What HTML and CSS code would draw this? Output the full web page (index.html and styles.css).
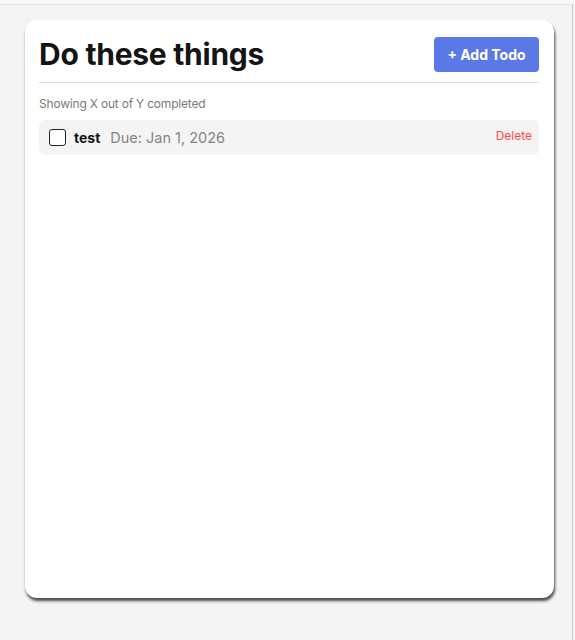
FILE: index.html
```html
<!DOCTYPE html>
<html lang="en">
<head>
<meta charset="utf-8">
<title>Todos</title>
<link rel="stylesheet" href="styles.css">
</head>
<body>
<div class="frame">
  <main class="card">
    <header class="card-header">
      <h1 class="title">Do these things</h1>
      <button class="add-btn" type="button">+ Add Todo</button>
    </header>
    <hr class="divider">
    <p class="summary">Showing X out of Y completed</p>
    <ul class="todo-list">
      <li class="todo-item">
        <span class="check" role="checkbox" aria-checked="false"></span>
        <span class="todo-name">test</span>
        <span class="todo-due">Due: Jan 1, 2026</span>
        <button class="delete-btn" type="button">Delete</button>
      </li>
    </ul>
  </main>
</div>
</body>
</html>
```

FILE: styles.css
```css
html, body {
  margin: 0;
  padding: 0;
  background: #f4f4f4;
  font-family: Inter, "Noto Sans", "Liberation Sans", sans-serif;
}

body {
  padding-top: 4px;
  background: linear-gradient(#f7f9fb 0, #f7f9fb 4px, #f4f4f4 4px);
  min-height: 640px;
  box-sizing: border-box;
}

.frame {
  width: 573px;
  height: 636px;
  box-sizing: border-box;
  border-top: 1px solid #d9e8ef;
  border-right: 1px solid #c9c9c9;
  padding: 15px 0 0 25px;
}

.card {
  width: 529px;
  height: 578px;
  box-sizing: border-box;
  background: #ffffff;
  border-radius: 12px;
  box-shadow: 1px 3px 3px rgba(0, 0, 0, 0.7);
  padding: 17px 15px 14px 14px;
}

.card-header {
  display: flex;
  align-items: center;
  justify-content: space-between;
  height: 35px;
}

.title {
  margin: 0;
  font-size: 30px;
  font-weight: 700;
  color: #141414;
  letter-spacing: -0.25px;
  line-height: 35px;
}

.add-btn {
  height: 35px;
  width: 105px;
  border: 0;
  border-radius: 4px;
  background: #5a79e6;
  color: #ffffff;
  font-family: inherit;
  font-size: 14px;
  font-weight: 700;
  padding: 0;
}

.divider {
  margin: 10px 0 0;
  border: 0;
  border-top: 1px solid #dcdcdc;
  height: 0;
}

.summary {
  margin: 14px 0 9px;
  font-size: 12px;
  line-height: 14px;
  letter-spacing: -0.2px;
  color: #7a7a7a;
}

.todo-list {
  list-style: none;
  margin: 0;
  padding: 0;
}

.todo-item {
  display: flex;
  align-items: center;
  height: 35px;
  box-sizing: border-box;
  padding: 0 7px 0 10px;
  background: #f4f4f4;
  border-radius: 6px;
}

.check {
  width: 17px;
  height: 17px;
  box-sizing: border-box;
  border: 1.5px solid #222222;
  border-radius: 3px;
  background: #ffffff;
  flex: none;
}

.todo-name {
  margin-left: 8px;
  font-size: 14px;
  font-weight: 700;
  color: #141414;
}

.todo-due {
  margin-left: 10px;
  font-size: 14.5px;
  color: #858585;
}

.delete-btn {
  margin-left: auto;
  align-self: flex-start;
  margin-top: 8px;
  border: 0;
  padding: 0;
  background: transparent;
  color: #ff4a4a;
  font-family: inherit;
  font-size: 12px;
}
```
